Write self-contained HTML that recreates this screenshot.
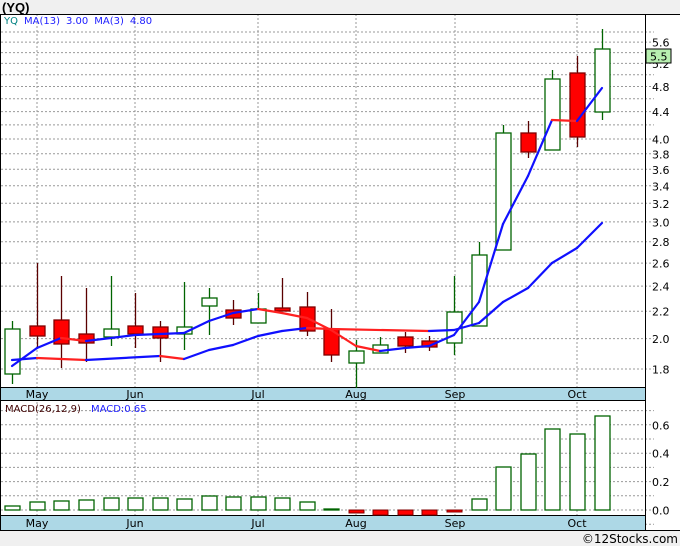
<!DOCTYPE html>
<html><head><meta charset="utf-8">
<style>
html,body{margin:0;padding:0;background:#f0f0f0;width:680px;height:546px;overflow:hidden;font-family:"DejaVu Sans","Liberation Sans",sans-serif;}
svg{position:absolute;left:0;top:0}
</style></head><body>
<svg id="s" width="680" height="546" xmlns="http://www.w3.org/2000/svg" font-family="DejaVu Sans, Liberation Sans, sans-serif"></svg>
<script>
var s=document.getElementById('s'),h='';
function py(p){return 139-288*(Math.log(p)-Math.log(4));}
// backgrounds
h+='<rect x="0" y="14" width="680" height="516" fill="#fff"/>';
h+='<text x="2" y="12" font-size="13" font-weight="bold" fill="#000" font-family="Liberation Sans, sans-serif">(YQ)</text>';
// price grid
for(var p=1.8;p<=5.81;p+=0.2){var y=py(p).toFixed(1);h+='<line x1="1" x2="654" y1="'+y+'" y2="'+y+'" stroke="#999" stroke-dasharray="2,2"/>';}
var labs=[5.6,4.8,4.4,4.0,3.8,3.6,3.4,3.2,3.0,2.8,2.6,2.4,2.2,2.0,1.8];
labs.forEach(function(p){h+='<text x="652" y="'+(py(p)+4.5).toFixed(1)+'" font-size="11" fill="#000">'+p.toFixed(1)+'</text>';});
h+='<text x="652" y="'+(py(5.2)+4.5).toFixed(1)+'" font-size="11" fill="#000">5.2</text>';
// macd grid
for(var v=-0.1;v<=0.71;v+=0.1){var y=(510-142*v).toFixed(1);h+='<line x1="1" x2="654" y1="'+y+'" y2="'+y+'" stroke="#999" stroke-dasharray="2,2"/>';}
[0.6,0.4,0.2,0.0].forEach(function(v){h+='<text x="652" y="'+(510-142*v+4.5).toFixed(1)+'" font-size="11" fill="#000">'+v.toFixed(1)+'</text>';});
// month vlines
var mx=[37,135,258,356,455,577],mn=['May','Jun','Jul','Aug','Sep','Oct'];
mx.forEach(function(x){h+='<line x1="'+x+'" x2="'+x+'" y1="14" y2="530" stroke="#999" stroke-dasharray="2,2"/>';});
// axis bands
h+='<rect x="0" y="387" width="645" height="13" fill="#add8e6"/>';
h+='<rect x="0" y="515" width="645" height="15" fill="#add8e6"/>';
mx.forEach(function(x,i){h+='<text x="'+x+'" y="398" font-size="11" text-anchor="middle" fill="#000">'+mn[i]+'</text>';h+='<text x="'+x+'" y="527" font-size="11" text-anchor="middle" fill="#000">'+mn[i]+'</text>';});
// lines
h+='<line x1="0" x2="680" y1="14.5" y2="14.5" stroke="#000"/>';
h+='<line x1="0.5" x2="0.5" y1="14" y2="530" stroke="#000"/>';
h+='<line x1="645.5" x2="645.5" y1="14" y2="530" stroke="#000"/>';
h+='<line x1="0" x2="645" y1="387.5" y2="387.5" stroke="#000"/>';
h+='<line x1="0" x2="645" y1="400.5" y2="400.5" stroke="#000"/>';
h+='<line x1="0" x2="645" y1="515.5" y2="515.5" stroke="#000"/>';
h+='<line x1="0" x2="680" y1="530.5" y2="530.5" stroke="#000"/>';
// candles [x, bodyTop, bodyBot, wickTop, wickBot, white]
var c=[[12,329,374,321,384,1],[37,326,336,263,347,0],[61,320,344,276,368,0],[86,334,343,288,362,0],[111,329,337,276,346,1],[135,326,334,293,348,0],[160,327,338,321,362,0],[184,327,334,282,350,1],[209,298,306,288,335,1],[233,310,318,300,325,0],[258,309,323,293,323,1],[282,308,311,278,311,0],[307,307,331,292,336,0],[331,329,355,309,362,0],[356,351,363,340,388,1],[380,345,353,337,353,1],[405,337,346,332,353,0],[429,341,347,336,351,0],[454,312,343,276,355,1],[479,255,326,242,326,1],[503,133,250,125,250,1],[528,133,152,121,158,0],[552,79,150,70,150,1],[577,73,137,56,147,0],[602,49,112,29,120,1]];
var lh='';
c.forEach(function(d){var col=d[5]?'#006400':'#5a0000';
lh+='<line x1="'+(d[0]+.5)+'" x2="'+(d[0]+.5)+'" y1="'+d[3]+'" y2="'+d[4]+'" stroke="'+col+'" stroke-width="1.3"/>';
lh+='<rect x="'+(d[0]-7)+'" y="'+d[1]+'" width="15" height="'+(d[2]-d[1])+'" fill="'+(d[5]?'#fff':'#f00')+'" stroke="'+(d[5]?'#006400':'#800000')+'" stroke-width="1.3"/>';});
h+=lh;
function ml(pts){var o='';for(var i=1;i<pts.length;i++){var a=pts[i-1],b=pts[i];o+='<line x1="'+a[0]+'" y1="'+a[1]+'" x2="'+b[0]+'" y2="'+b[1]+'" stroke="'+(b[1]<=a[1]+0.5?'#1010ff':'#ff2020')+'" stroke-width="2.2" stroke-linecap="round"/>';}return o;}
h+=ml([[12,360],[37,358],[86,360],[160,356],[184,359],[209,350],[233,345],[258,336],[282,331],[307,328],[331,329],[429,331],[454,330],[479,323],[503,302],[528,288],[552,263],[577,248],[602,223]]);
h+=ml([[12,366],[37,348],[61,338],[86,341],[111,338],[135,335],[160,334],[184,333],[209,321],[233,313],[258,309],[282,313],[307,318],[331,330],[356,346],[380,351],[405,348],[429,346],[454,335],[479,302],[503,224],[528,176],[552,120],[577,121],[602,88]]);
// macd bars
var m=[[12,506],[37,502],[61,501],[86,500],[111,498],[135,498],[160,498],[184,499],[209,496],[233,497],[258,497],[282,498],[307,502],[331,509],[356,513],[380,515],[405,515],[429,515],[454,512],[479,499],[503,467],[528,454],[552,429],[577,434],[602,416]];
m.forEach(function(d){if(d[1]<=510){h+='<rect x="'+(d[0]-7)+'" y="'+d[1]+'" width="15" height="'+(510-d[1])+'" fill="#fff" stroke="#006400" stroke-width="1.3"/>';}else{h+='<rect x="'+(d[0]-7)+'" y="510" width="15" height="'+(d[1]-510)+'" fill="#f00" stroke="#800000" stroke-width="1"/>';}});
// legends
h+='<text x="4" y="24" font-size="10"><tspan fill="#008080">YQ</tspan><tspan fill="#2020ff" dx="6">MA(13)</tspan><tspan fill="#2020ff" dx="6">3.00</tspan><tspan fill="#2020ff" dx="6">MA(3)</tspan><tspan fill="#2020ff" dx="6">4.80</tspan></text>';
h+='<text x="5" y="412" font-size="10"><tspan fill="#400000">MACD(26,12,9)</tspan><tspan fill="#2020ff" dx="10">MACD:0.65</tspan></text>';
// price tag
h+='<rect x="646" y="49" width="25" height="14" fill="#b8f0b0" stroke="#000"/>';
h+='<text x="650" y="60.5" font-size="11" fill="#000">5.5</text>';
h+='<text x="678" y="543" font-size="12" text-anchor="end" fill="#000">©12Stocks.com</text>';
s.innerHTML=h;
</script>
</body></html>
